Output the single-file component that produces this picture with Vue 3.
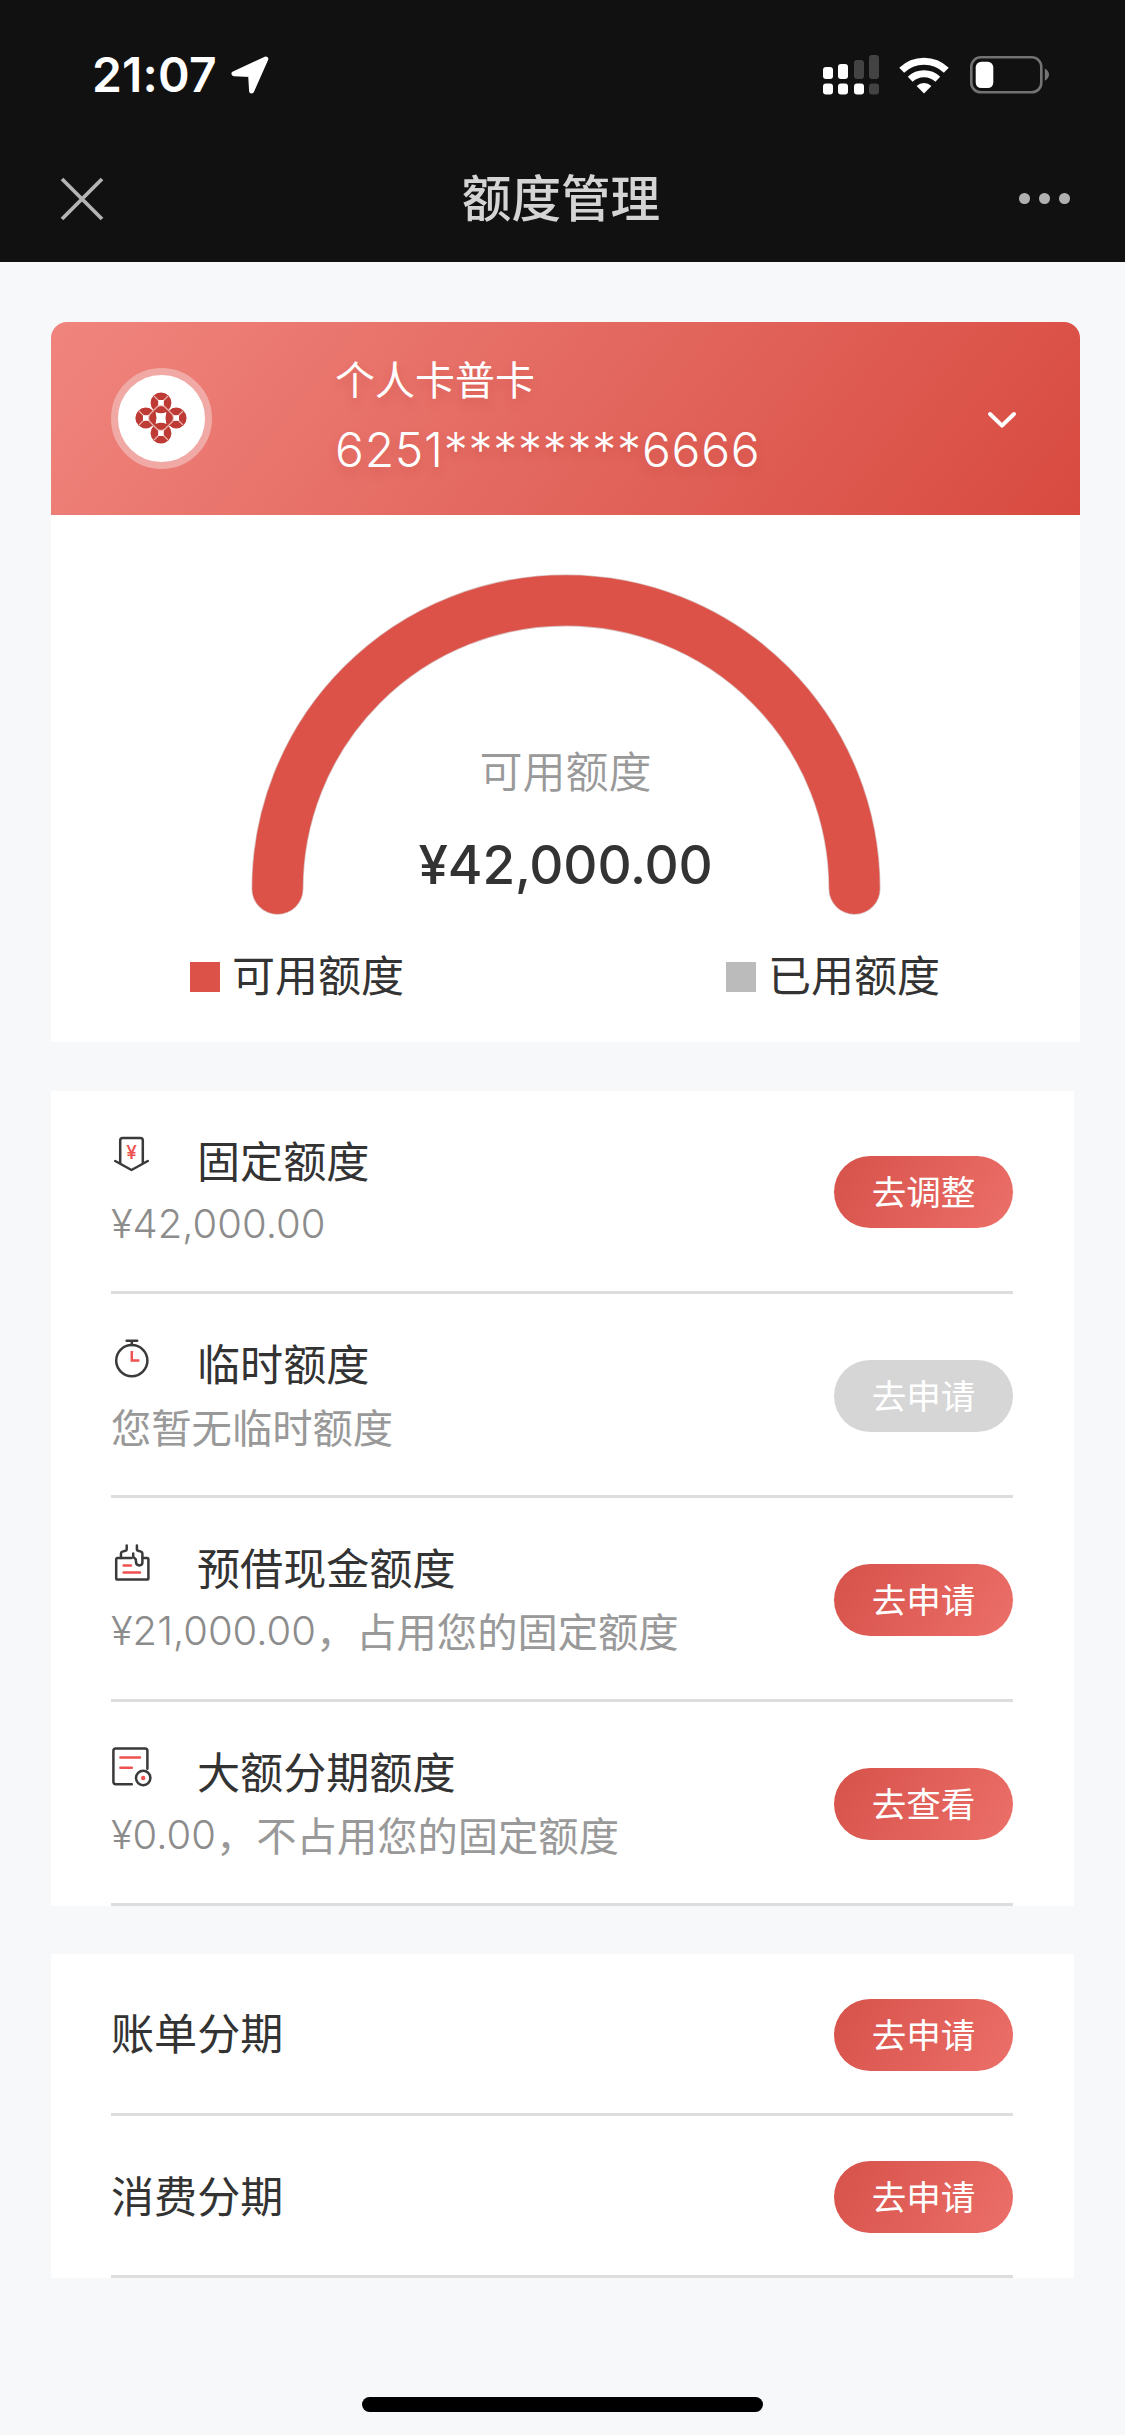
<script setup>
const limits = [
  { icon: 'fixed', title: '固定额度', amount: '¥42,000.00', note: '', action: '去调整', disabled: false },
  { icon: 'timer', title: '临时额度', amount: '', note: '您暂无临时额度', action: '去申请', disabled: true },
  { icon: 'cash', title: '预借现金额度', amount: '¥21,000.00', note: '，占用您的固定额度', action: '去申请', disabled: false },
  { icon: 'bill', title: '大额分期额度', amount: '¥0.00', note: '，不占用您的固定额度', action: '去查看', disabled: false },
]
const instalments = [
  { title: '账单分期', action: '去申请' },
  { title: '消费分期', action: '去申请' },
]
const petals = [[0, -15.2], [15.2, 0], [0, 15.2], [-15.2, 0]]
</script>

<template>
  <div class="screen">
    <header class="top">
      <div class="status">
        <div class="clock">
          <span class="time">21:07</span>
          <svg class="arrow" width="38" height="38" viewBox="0 0 38 38">
            <path d="M34.8 3 L3 17.8 L19.6 18.6 L20.6 35 Z" fill="#fff" stroke="#fff" stroke-width="5" stroke-linejoin="round" />
          </svg>
        </div>
        <div class="signals">
          <svg width="56" height="40" viewBox="0 0 56 40">
            <g fill="#fff">
              <rect x="0" y="12" width="10" height="12" rx="3" />
              <rect x="15" y="9" width="10" height="15" rx="3" />
              <rect x="0" y="28.4" width="10" height="11" rx="3" />
              <rect x="15" y="28.4" width="10" height="11" rx="3" />
              <rect x="31" y="28.4" width="10" height="11" rx="3" />
            </g>
            <g fill="#434343">
              <rect x="31" y="5" width="10" height="19" rx="3" />
              <rect x="46" y="0" width="10" height="24" rx="3" />
              <rect x="46" y="28.4" width="10" height="11" rx="3" />
            </g>
          </svg>
          <svg class="wifi" width="50" height="37" viewBox="0 0 50 37">
            <g fill="none" stroke="#fff" stroke-width="7">
              <path d="M2.7 13.2 A32 32 0 0 1 47.3 13.2" />
              <path d="M11.2 22.2 A20 20 0 0 1 38.8 22.2" />
            </g>
            <path d="M17.6 29 A10.8 10.8 0 0 1 32.4 29 L25 36.4 Z" fill="#fff" />
          </svg>
          <svg class="battery" width="80" height="38" viewBox="0 0 80 38">
            <rect x="1.3" y="1.3" width="70" height="35" rx="9.5" fill="none" stroke="#737373" stroke-width="2.6" />
            <rect x="5.7" y="5.8" width="17.6" height="26.2" rx="5.5" fill="#fff" />
            <path d="M74.8 12.6 Q79 15 79 18.6 Q79 22.4 74.8 24.8 Z" fill="#737373" />
          </svg>
        </div>
      </div>
      <div class="nav">
        <svg width="44" height="44" viewBox="0 0 44 44">
          <path d="M2 2 L42 42 M42 2 L2 42" stroke="#b4b4b4" stroke-width="3.8" />
        </svg>
        <h1>额度管理</h1>
        <div class="more"><i></i><i></i><i></i></div>
      </div>
    </header>

    <main>
      <section class="card">
        <div class="account">
          <div class="logo">
            <svg width="54" height="54" viewBox="-27 -27 54 54">
              <circle r="10.4" fill="#bd3b34" />
              <circle v-for="(p, i) in petals" :key="i" :cx="p[0]" :cy="p[1]" r="10.4" fill="#bd3b34" />
              <g fill="none" stroke="#ecb3af" stroke-width="1.1">
                <path d="M-7 -22 L22 7 M7 -22 L-22 7 M-22 -7 L7 22 M22 -7 L-7 22" />
                <path d="M-7.2 -7.8 Q0 -17 7.2 -7.8 M-7.2 7.8 Q0 17 7.2 7.8 M-7.8 -7.2 Q-17 0 -7.8 7.2 M7.8 -7.2 Q17 0 7.8 7.2" stroke-width=".8" />
              </g>
              <path d="M-5.4 -6 Q0 -3.6 5.4 -6 Q3.6 0 5.4 6 Q0 3.6 -5.4 6 Q-3.6 0 -5.4 -6 Z" fill="#fff" />
              <rect v-for="(p, i) in petals" :key="'h' + i" :x="p[0] - 2.8" :y="p[1] - 2.8" width="5.6" height="5.6" fill="#fff" />
            </svg>
          </div>
          <div class="holder">
            <span class="kind">个人卡普卡</span>
            <span class="number">6251********6666</span>
          </div>
          <svg class="chevron" width="30" height="18" viewBox="0 0 30 18">
            <path d="M3 3 L15 14.6 L27 3" fill="none" stroke="#fff" stroke-width="4" stroke-linecap="round" stroke-linejoin="round" />
          </svg>
        </div>
        <div class="gauge">
          <svg class="arc" width="630" height="342" viewBox="0 0 630 342">
            <g fill="none" stroke-linecap="round">
              <path d="M26.5 314.8 A288.5 288.5 0 0 1 603.5 314.8" stroke="#d8b9b7" stroke-width="52" />
              <path d="M26.5 314.8 A288.5 288.5 0 0 1 603.5 314.8" stroke="#dc5148" stroke-width="50.4" />
            </g>
          </svg>
          <div class="reading">
            <span class="caption">可用额度</span>
            <strong>¥42,000.00</strong>
          </div>
        </div>
        <div class="legend">
          <span class="key"><i class="free"></i>可用额度</span>
          <span class="key"><i class="used"></i>已用额度</span>
        </div>
      </section>

      <section class="list">
        <div v-for="row in limits" :key="row.title" class="row">
          <div class="info">
            <div class="heading">
              <svg class="icon" width="42" height="42" viewBox="0 0 42 42" fill="none" stroke="#3a3a3a" stroke-width="2.5" stroke-linecap="round" stroke-linejoin="round">
                <template v-if="row.icon === 'fixed'">
                  <path d="M9.2 28.6 V6.4 Q9.2 4 11.6 4 H29.4 Q31.8 4 31.8 6.4 V28.6" />
                  <path d="M4.2 27 L20.5 36 L36.8 27" />
                  <text x="20.5" y="25" text-anchor="middle" class="yen">¥</text>
                </template>
                <template v-else-if="row.icon === 'timer'">
                  <circle cx="20.8" cy="23.6" r="15.6" />
                  <path d="M15.6 3.8 H26.2 M20.8 3.8 V8" />
                  <path d="M20.8 14 V23.6 H28.4" stroke="#ee5150" stroke-linecap="butt" stroke-linejoin="miter" />
                </template>
                <template v-else-if="row.icon === 'cash'">
                  <path d="M20.6 17 H6.6 Q5.2 17 5.2 18.4 V37.2 Q5.2 38.6 6.6 38.6 H36 Q37.4 38.6 37.4 37.2 V18.4 Q37.4 17 36 17 H31.6" />
                  <path d="M15.7 4.4 V8.4 Q15.7 9.6 14.4 9.8 L11.4 10.6 Q10 11 10 12.4 V17" />
                  <path d="M25.9 4.4 V8.4 Q25.9 9.6 27.2 9.8 L30 10.6 Q31.4 11 31.4 12.4 V21.6 Q31.4 24.4 28.4 24.4 Q25.2 24.4 25 21.2 L24.8 18.4 L22.2 15.8 V12.6" />
                  <path d="M12.6 24.6 H20 M12.6 31.4 H29" stroke="#ee5150" />
                </template>
                <template v-else>
                  <path d="M36.4 23.8 V5.8 Q36.4 3.4 34 3.4 H4.8 Q2.4 3.4 2.4 5.8 V36.8 Q2.4 39.2 4.8 39.2 H20.8" />
                  <circle cx="32.2" cy="33" r="7.2" />
                  <path d="M9.4 12.6 H29 M9.4 22.7 H20.8" stroke="#ee5150" />
                  <circle cx="32.2" cy="33" r="2.2" fill="#ee5150" stroke="none" />
                </template>
              </svg>
              <h2>{{ row.title }}</h2>
            </div>
            <p><span v-if="row.amount" class="amount">{{ row.amount }}</span><span class="note">{{ row.note }}</span></p>
          </div>
          <button :class="{ off: row.disabled }">{{ row.action }}</button>
        </div>
      </section>

      <section class="list short">
        <div v-for="row in instalments" :key="row.title" class="row">
          <h2>{{ row.title }}</h2>
          <button>{{ row.action }}</button>
        </div>
      </section>
    </main>

    <div class="home"></div>
  </div>
</template>

<style>
body {
  margin: 0;
  background: #f7f8fa;
}
</style>

<style scoped>
.screen {
  width: 1125px;
  height: 2435px;
  background: #f7f8fa;
  font-family: "Noto Sans CJK SC", sans-serif;
  color: #333;
  display: flex;
  flex-direction: column;
  overflow: hidden;
}
h1, h2, p { margin: 0; font-weight: 400; }
svg { display: block; flex: none; }
.top {
  height: 262px;
  background: #111;
  flex: none;
}
.status {
  height: 150px;
  display: flex;
  justify-content: space-between;
  align-items: center;
  padding: 0 76px 0 92px;
  box-sizing: border-box;
}
.clock { display: flex; align-items: center; }
.time {
  width: 139px;
  font: 600 48px/60px Inter, sans-serif;
  letter-spacing: .2px;
  color: #fff;
}
.signals {
  display: flex;
  align-items: center;
}
.wifi { margin-left: 20px; }
.battery { margin: 0 -1px 0 21px; }
.nav {
  height: 97px;
  display: grid;
  grid-template-columns: 100px 1fr 100px;
  align-items: center;
  padding: 0 55px 0 60px;
}
h1 {
  font-size: 49.6px;
  font-weight: 500;
  line-height: 70px;
  margin: -8px 8px 0 0;
  text-align: center;
  color: #d4d4d4;
}
.more { display: flex; justify-content: flex-end; gap: 9.5px; }
.more i {
  width: 10.6px;
  height: 10.6px;
  border-radius: 50%;
  background: #b0b0b0;
}
main { padding: 60px 45px 0 51px; flex: 1; }
.card {
  height: 719.5px;
  background: #fff;
  border-radius: 16px 16px 0 0;
  overflow: hidden;
}
.account {
  height: 192.5px;
  display: flex;
  align-items: center;
  background: linear-gradient(128deg, #f0857e 0%, #e3685f 50%, #d84a40 100%);
}
.logo {
  width: 87px;
  height: 87px;
  margin-left: 59.5px;
  border: 7.5px solid #f0a9a4;
  border-radius: 50%;
  background: #fff;
  display: flex;
  align-items: center;
  justify-content: center;
}
.holder {
  display: flex;
  flex-direction: column;
  margin: -8px 0 0 123.5px;
  width: 640px;
  color: #fff;
  text-shadow: 0 6px 10px rgba(190, 60, 50, .3);
}
.kind {
  font-size: 40px;
  line-height: 70px;
}
.number {
  font: 300 48px/70px Inter, sans-serif;
  letter-spacing: .75px;
  margin-top: 2px;
}
.chevron { margin: 4px 0 0 12px; }
.gauge {
  display: grid;
  justify-items: center;
  padding-top: 59px;
}
.arc, .reading { grid-area: 1 / 1; }
.reading {
  display: flex;
  flex-direction: column;
  align-items: center;
  padding-top: 165px;
}
.caption {
  font-size: 43px;
  font-weight: 350;
  line-height: 60px;
  color: #999;
}
strong {
  font: 500 53px/66px Inter, sans-serif;
  letter-spacing: -.2px;
  margin-top: 33px;
}
.legend {
  display: flex;
  justify-content: space-between;
  padding: 26px 140px 0 139px;
  font-size: 43px;
  line-height: 64px;
  margin-top: -1px;
}
.key { display: flex; align-items: center; }
.key i {
  width: 30px;
  height: 30px;
  margin: 8px 12px 0 0;
}
.free { background: #dc5148; }
.used { background: #bbb; }
.list {
  width: 1023px;
  margin-top: 49px;
  padding: 0 61px 0 60px;
  box-sizing: border-box;
  background: #fff;
}
.row {
  height: 203.75px;
  box-sizing: border-box;
  border-bottom: 3px solid #ddd;
  display: flex;
  align-items: center;
  justify-content: space-between;
}
.info {
  align-self: flex-start;
  padding-top: 38px;
}
.heading { display: flex; }
.icon { margin: 5px 44px 0 0; }
.yen {
  font: 500 19px Inter, sans-serif;
  fill: #ee5150;
  stroke: none;
}
h2 {
  font-size: 43.1px;
  line-height: 61px;
}
p {
  display: flex;
  margin-top: 3px;
  height: 61px;
  color: #999;
}
.amount {
  font: 300 40px/61px Inter, sans-serif;
  color: #8c8c8c;
}
.note {
  font-size: 40.3px;
  line-height: 60px;
}
button {
  width: 179px;
  height: 72px;
  margin: 3px 0 0;
  border: 0;
  padding: 0 0 4px;
  border-radius: 36px;
  background: linear-gradient(120deg, #d6524a, #ec6f69);
  color: #fff;
  font: 400 34.6px/68px "Noto Sans CJK SC", sans-serif;
}
.off { background: #d6d6d6; }
.short { margin-top: 48px; }
.short .row { height: 162.4px; }
.short h2 { margin-top: -3px; }
.home {
  width: 401px;
  height: 15px;
  border-radius: 8px;
  background: #000;
  margin: 0 auto 23px;
}
</style>
